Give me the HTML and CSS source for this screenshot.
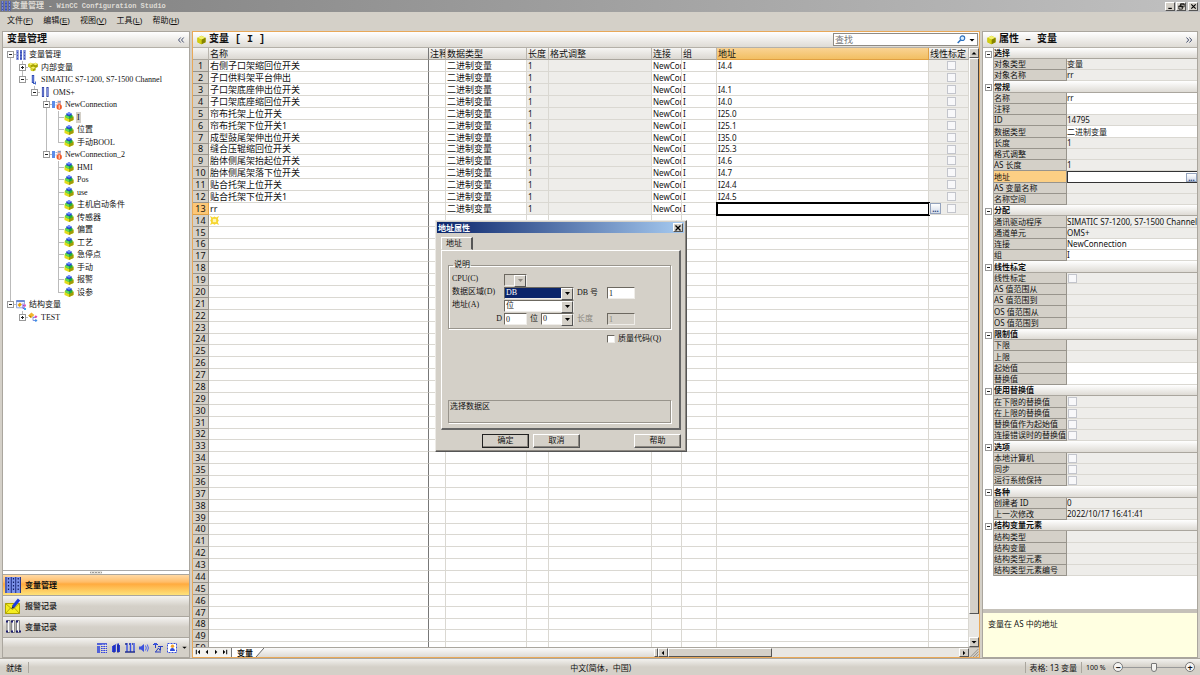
FILE: index.html
```html
<!DOCTYPE html>
<html lang="zh-CN">
<head>
<meta charset="utf-8">
<title>变量管理 - WinCC Configuration Studio</title>
<link rel="stylesheet" href="styles.css">
</head>
<body>
<svg class="defs" aria-hidden="true">
  <symbol id="i-bars" viewBox="0 0 10 10"><path d="M1.5 0v10M5 0v10M8.5 0v10" stroke="#3c50b8" stroke-width="2"/><path d="M1.5 0v10M5 0v10M8.5 0v10" stroke="#93a4ee" stroke-width=".7" stroke-dasharray="2 1"/></symbol>
  <symbol id="i-bars2" viewBox="0 0 10 10"><path d="M3 0v10M7.5 0v10" stroke="#3448a8" stroke-width="2.2"/><path d="M3 1v8M7.5 1v8" stroke="#8fa0ee" stroke-width=".8"/></symbol>
  <symbol id="i-driver" viewBox="0 0 10 10"><path d="M5 0v8" stroke="#2e4ab4" stroke-width="2.4"/><path d="M5 1v6" stroke="#91a4f0" stroke-width=".8"/><path d="M5 8.5h3M7.5 6.5v3" stroke="#4468c8"/></symbol>
  <symbol id="i-cube" viewBox="0 0 10 10"><path d="M.5 2.6 5 .4l4.5 2.2v5L5 9.7.5 7.6z" fill="#b8b400"/><path d="M.5 2.6 5 .4l4.5 2.2L5 4.6z" fill="#f2f06c"/><path d="M5 4.6v5.1l4.5-2.1v-5z" fill="#868400"/><path d="M.5 2.6 5 4.6v5.1L.5 7.6z" fill="#d2ce12"/></symbol>
  <symbol id="i-cubes" viewBox="0 0 11 10"><path d="M.3 1.6 3 .3l2.6 1.2L8.2.4l2.6 1.3v3.2L8.4 6v2.6L5.6 9.8 3 8.500V6L.3 4.8z" fill="#a6a200"/><path d="m.3 1.6 2.700-1.3 2.600 1.300L3 3zM5.600 1.700 8.200.4l2.600 1.300L8.200 3zM3 5.800l2.600-1.300 2.800 1.300-2.800 1.300z" fill="#f7f268"/><path d="M.3 1.600 3 3v2.600L.3 4.600zM3 5.800l2.600 1.300v2.600L3 8.500z" fill="#d7d227"/></symbol>
  <symbol id="i-group" viewBox="0 0 10 10"><path d="M.5 4.500 5 3l4.500 1.500V8L5 10 .5 8z" fill="#e0dc1c"/><path d="M5 6.500V10l4.500-2V4.500z" fill="#a09c08"/><path d="M1.500 3 5 2l3.500 1v2.300L5 6.900 1.500 5.300z" fill="#1fae3c"/><path d="m1.500 3 3.500 1.500v2.400L1.500 5.300z" fill="#63d858"/><path d="M2.300 1.500 5 .2l2.700 1.300v1.600L5 4.300 2.300 3.100z" fill="#2442d0"/><path d="M2.300 1.500 5 .2l2.700 1.300L5 2.700z" fill="#6f94ff"/></symbol>
  <symbol id="i-conn" viewBox="0 0 10 10"><path d="M0 1h3v7H0z" fill="#5b8be8"/><path d="M3.5 2.5h2M3.5 5h2" stroke="#8bb0ec"/><path d="M5.5.7H9v5.5H5.500z" fill="#e8a8a0"/><path d="M6.200 1.800h2.500" stroke="#33a1e8"/><circle cx="7.2" cy="7" r="2.7" fill="#f05a28"/><path d="M7.200 5.200v3.600" stroke="#fff" stroke-width=".9"/></symbol>
  <symbol id="i-struct" viewBox="0 0 10 10"><path d="M.5.5h8v7.300h-8z" fill="#eef2ff" stroke="#6a86cc" stroke-width=".7"/><path d="M.5.5h8v1.300h-8z" fill="#456ccb"/><path d="m1.600 5 2.300-2.500 2 1.900-2.300 2.500z" fill="#e8a000"/><path d="M7 3.500v5M7 5.500h2M7 8.500h2" stroke="#8451d8"/><path d="M8.300 4.500h1.700v2H8.300z" fill="#f05ab8"/><path d="M8 8h2v2H8z" fill="#3ba9f0"/></symbol>
  <symbol id="i-type" viewBox="0 0 10 10"><path d="M.2 3.500 3.400.5l3 2.400-3.300 3.200z" fill="#f3b62d"/><path d="m.2 3.500 2.900.6v2z" fill="#b77c0b"/><path d="M5 4.500v4M5 5.500h3M5 8.500h3" stroke="#6a79d8" stroke-width=".8"/><path d="m7.800 3.300 1.700 1.500-1.700 1.500-1.500-1.500z" fill="#dd45b1"/><path d="m7.800 7 1.700 1.400L7.800 10 6.300 8.400z" fill="#3e8ee6"/></symbol>
  <symbol id="i-navbars" viewBox="0 0 16 16"><path d="M0 0h16v16H0z" fill="#7c92ea"/><path d="M1 0v16M6.3 0v16M10.7 0v16M15.5 0v16" stroke="#27358c" stroke-width="1.1"/><path d="M3.5 1v14M8.5 1v14M13.2 1v14" stroke="#101c60" stroke-width="1.2" stroke-dasharray="1.5 2"/></symbol>
  <symbol id="i-mail" viewBox="0 0 16 16"><path d="M.5 5.5h14v10H.5z" fill="#f5ee20" stroke="#b0a400"/><path d="m.5 5.5 7 6 7-6M.5 15.5l5-5.5M14.5 15.5l-5-5.5" fill="none" stroke="#988e00" stroke-width=".7"/><path d="m8 9 6-7.5" stroke="#1c3ce0" stroke-width="3"/><path d="m6.5 11 .7-2.8 2 1.5z" fill="#141c50"/></symbol>
  <symbol id="i-log" viewBox="0 0 16 16"><path d="M2 1.5h3v12H2zM6.7 1.5h3v12h-3zM11.4 1.5h3v12h-3z" fill="#fafafa" stroke="#777"/><path d="M1 2.5h2M6 2.5h2M11 2.5h2M1 12.5h2M6 12.5h2M11 12.5h2M14 12.5h2" stroke="#1c1c70" stroke-width="2"/></symbol>
  <symbol id="i-t1" viewBox="0 0 10 10"><path d="M0 0h10v2H0zM0 3h3v7H0z" fill="#5262d8"/><path d="M4 3.5h6M4 5.5h6M4 7.5h6M4 9.5h6" stroke="#3544d8"/><path d="M6 1v9M8.5 1v9" stroke="#fff" stroke-width=".5"/></symbol>
  <symbol id="i-t2" viewBox="0 0 10 10"><path d="M1 3h3v6H1zM6 2h3v7H6z" fill="#2a3ed8"/><path d="M1 3.5 5 1v8L1 8zM5 1l3-.7v2z" fill="#3247e4"/><path d="M3 2v8M7 1v9" stroke="#101870" stroke-width=".8"/></symbol>
  <symbol id="i-t3" viewBox="0 0 10 10"><path d="M2 0v9M5.5 0v9M9 0v9" stroke="#3850e4" stroke-width="1.4"/><path d="M0 1h2M4 1h1M7 1h1M0 9h10" stroke="#25318d" stroke-width="1.3"/></symbol>
  <symbol id="i-t4" viewBox="0 0 10 10"><path d="M0 3.5h2L5 1v8L2 6.5H0z" fill="#3c52dc"/><path d="M6.5 2.5q1.6 2.5 0 5M8.3 1.5q2.2 3.5 0 7" fill="none" stroke="#4b62f0"/></symbol>
  <symbol id="i-t5" viewBox="0 0 10 10"><path d="M0 1.5h5M5 3.5h5M2.5 2v3M7.5 4v3M2 9h6M2.5 9l3-4 2 3" fill="none" stroke="#2b3fc0"/><path d="M1 0h3v2H1z" fill="#3a54e0"/></symbol>
  <symbol id="i-t6" viewBox="0 0 10 10"><path d="M.5.5h9v9h-9z" fill="#fff" stroke="#3850dc" stroke-dasharray="2 1"/><path d="M3 8q0-3 2.3-3T8 8z" fill="#2d4adb"/><circle cx="5.5" cy="3.2" r="1.7" fill="#f3a32e"/></symbol>
  <symbol id="i-search" viewBox="0 0 10 10"><circle cx="6" cy="3.6" r="2.6" fill="#d8edff" stroke="#2b71c0" stroke-width="1.2"/><path d="M4 5.6.8 9" stroke="#2b71c0" stroke-width="1.7"/></symbol>
  <symbol id="i-new" viewBox="0 0 8 8"><path d="m0 0 2.5 1.3L4 .4l1.5.9L8 0 6.9 2.5 7.8 4l-.9 1.5L8 8 5.5 6.9 4 7.7 2.5 6.9 0 8l1.1-2.5L.2 4l.9-1.5z" fill="#f6d52c"/><path d="M2.5 2.5h3v3h-3z" fill="#fff6b0"/></symbol>
  <symbol id="i-up" viewBox="0 0 8 8"><path d="M1.5 5.5h5L4 3z"/></symbol>
  <symbol id="i-down" viewBox="0 0 8 8"><path d="M1.5 3h5L4 5.5z"/></symbol>
  <symbol id="i-left" viewBox="0 0 8 8"><path d="M5 1.7v4.6L2.7 4z"/></symbol>
  <symbol id="i-right" viewBox="0 0 8 8"><path d="M3 1.7v4.6L5.3 4z"/></symbol>
  <symbol id="i-first" viewBox="0 0 8 8"><path d="M6 1.7v4.6L3.7 4zM1.8 1.7h1v4.6h-1z"/></symbol>
  <symbol id="i-last" viewBox="0 0 8 8"><path d="M2 1.7v4.6L4.3 4zM5.2 1.7h1v4.6h-1z"/></symbol>
  <symbol id="i-close" viewBox="0 0 8 8"><path d="m1.5 1.5 5 5m0-5-5 5" stroke="#000" stroke-width="1.3"/></symbol>
  <symbol id="i-min" viewBox="0 0 8 8"><path d="M1.5 6.2h4" stroke="#000" stroke-width="1.4"/></symbol>
  <symbol id="i-rest" viewBox="0 0 8 8"><path d="M3 1h4v3.5H3zM1 3.5h4V7H1z" fill="#d4d0c8" stroke="#000" stroke-width=".9"/><path d="M2.5 1.3h5M.5 3.7h5" stroke="#000" stroke-width=".9"/></symbol>
  <symbol id="i-chev-l" viewBox="0 0 8 8"><path d="M3.7 1.5 1.5 4l2.2 2.5M6.7 1.5 4.5 4l2.2 2.5" fill="none" stroke="#444f70"/></symbol>
  <symbol id="i-chev-r" viewBox="0 0 8 8"><path d="M1.5 1.5 3.7 4 1.5 6.5M4.5 1.5 6.7 4 4.5 6.5" fill="none" stroke="#444f70"/></symbol>
</svg>

<header class="titlebar">
  <svg class="ic"><use href="#i-bars"/></svg>
  <h1><span>变量管理</span> - WinCC Configuration Studio</h1>
  <div class="winbtns">
    <button class="bevel" type="button" aria-label="最小化"><svg><use href="#i-min"/></svg></button>
    <button class="bevel" type="button" aria-label="还原"><svg><use href="#i-rest"/></svg></button>
    <button class="bevel last" type="button" aria-label="关闭"><svg><use href="#i-close"/></svg></button>
  </div>
</header>

<nav class="menubar">
  <button type="button">文件(<u>F</u>)</button>
  <button type="button">编辑(<u>E</u>)</button>
  <button type="button">视图(<u>V</u>)</button>
  <button type="button">工具(<u>L</u>)</button>
  <button type="button">帮助(<u>H</u>)</button>
</nav>

<main class="workspace">
  <aside class="panel nav-panel">
    <div class="panel-head"><h2>变量管理</h2><button class="flat" type="button" aria-label="折叠"><svg class="chev"><use href="#i-chev-l"/></svg></button></div>
    <ul class="tree" id="tree"></ul>
    <div class="splitter"></div>
    <button class="nav-item active" type="button"><svg><use href="#i-navbars"/></svg>变量管理</button>
    <button class="nav-item" type="button"><svg><use href="#i-mail"/></svg>报警记录</button>
    <button class="nav-item" type="button"><svg><use href="#i-log"/></svg>变量记录</button>
    <div class="nav-tools">
      <svg><use href="#i-t1"/></svg><svg><use href="#i-t2"/></svg><svg><use href="#i-t3"/></svg><svg><use href="#i-t4"/></svg><svg><use href="#i-t5"/></svg><svg><use href="#i-t6"/></svg><svg class="more"><use href="#i-down"/></svg>
    </div>
  </aside>

  <section class="panel grid-panel">
    <div class="panel-head">
      <svg class="ic"><use href="#i-cube"/></svg><h2>变量 [ I ]</h2>
      <label class="search"><input type="text" placeholder="查找" aria-label="查找"><svg class="mag"><use href="#i-search"/></svg><svg class="drop"><use href="#i-down"/></svg></label>
    </div>
    <div class="grid-body">
      <div class="sheet">
        <table class="vars">
          <colgroup><col class="w-num"><col class="w-name"><col class="w-note"><col class="w-type"><col class="w-len"><col class="w-fmt"><col class="w-conn"><col class="w-group"><col><col class="w-lin"></colgroup>
          <thead><tr><th></th><th class="name">名称</th><th>注释</th><th>数据类型</th><th>长度</th><th>格式调整</th><th>连接</th><th>组</th><th class="hot">地址</th><th>线性标定</th></tr></thead>
          <tbody id="vars"></tbody>
        </table>
      </div>
      <div class="vscroll">
        <button class="bevel" type="button" aria-label="向上"><svg><use href="#i-up"/></svg></button>
        <div class="thumb bevel"></div><div class="space"></div>
        <button class="bevel" type="button" aria-label="向下"><svg><use href="#i-down"/></svg></button>
      </div>
    </div>
    <div class="tabbar">
      <div class="pager">
        <button class="flat" type="button" aria-label="第一个"><svg><use href="#i-first"/></svg></button>
        <button class="flat" type="button" aria-label="上一个"><svg><use href="#i-left"/></svg></button>
        <button class="flat" type="button" aria-label="下一个"><svg><use href="#i-right"/></svg></button>
        <button class="flat" type="button" aria-label="最后一个"><svg><use href="#i-last"/></svg></button>
      </div>
      <button class="sheet-tab" type="button">变量</button>
      <svg class="tab-edge" viewBox="0 0 9 9"><path d="M0 0h9L1 9H0z" fill="#fff"/><path d="M9 0 1 9" stroke="#666"/></svg>
      <div class="tab-space"></div>
      <div class="hscroll">
        <div class="handle bevel"></div>
        <button class="bevel" type="button" aria-label="向左"><svg><use href="#i-left"/></svg></button>
        <div class="thumb bevel"></div><div class="space"></div>
        <button class="bevel" type="button" aria-label="向右"><svg><use href="#i-right"/></svg></button>
      </div>
      <svg class="grip" viewBox="0 0 10 10"><path d="m1 10 9-9M4 10l6-6M7 10l3-3" stroke="#8c8880"/></svg>
    </div>
  </section>

  <aside class="panel prop-panel">
    <div class="panel-head"><svg class="ic"><use href="#i-cube"/></svg><h2>属性 – 变量</h2><button class="flat" type="button" aria-label="展开"><svg class="chev"><use href="#i-chev-r"/></svg></button></div>
    <div class="prop-body">
      <table class="props"><colgroup><col class="w-gut"><col class="w-label"><col></colgroup><tbody id="props"></tbody></table>
    </div>
    <p class="hint">变量在 AS 中的地址</p>
  </aside>

  <form class="dialog" role="dialog" aria-labelledby="dlg-title">
    <div class="dlg-head"><h3 id="dlg-title">地址属性</h3><button class="bevel" type="button" aria-label="关闭"><svg><use href="#i-close"/></svg></button></div>
    <div class="dlg-body">
      <button class="dlg-tab" type="button">地址</button>
      <div class="page">
        <fieldset>
          <legend>说明</legend>
          <div class="fields">
            <label for="cpu">CPU(C)</label>
            <span class="combo small off"><select id="cpu" disabled><option></option></select></span>
            <span></span><span></span>
            <label for="area">数据区域(D)</label>
            <span class="combo picked"><select id="area"><option>DB</option></select></span>
            <label class="mid" for="dbno">DB 号</label>
            <input id="dbno" type="text" value="1">
            <label for="addr">地址(A)</label>
            <span class="combo"><select id="addr"><option>位</option></select></span>
            <span></span><span></span>
            <label class="end" for="dno">D</label>
            <span class="pair"><input id="dno" type="text" value="0"><label for="bit">位</label><span class="combo bit"><select id="bit"><option>0</option></select></span></span>
            <label class="mid dim" for="len">长度</label>
            <input id="len" type="text" value="1" disabled>
          </div>
        </fieldset>
        <div class="quality"><input id="quality" type="checkbox"><label for="quality">质量代码(Q)</label></div>
        <p class="note">选择数据区</p>
      </div>
      <div class="actions">
        <button class="bevel default" type="submit">确定</button>
        <button class="bevel" type="button">取消</button>
        <button class="bevel help" type="button">帮助</button>
      </div>
    </div>
  </form>
</main>

<footer class="status">
  <span class="ready">就绪</span>
  <span class="lang">中文(简体，中国)</span>
  <span class="count">表格: 13 变量</span>
  <span class="zoom">100 %</span>
  <button class="round" type="button" aria-label="缩小">−</button>
  <input class="slider" type="range" min="0" max="100" value="50" aria-label="缩放">
  <button class="round" type="button" aria-label="放大">+</button>
</footer>
<script src="app.js"></script>
</body>
</html>
```

FILE: styles.css
```css
:root {
  --face: #d4d0c8;
  --line: #dad8d2;
  --muted: #eeedea;
  --cjk: "Noto Sans CJK SC", sans-serif;
  --ui: "Noto Sans", var(--cjk);
  --mono: "Liberation Mono", var(--cjk);
  --serif: "Liberation Serif", var(--cjk);
}

* { box-sizing: border-box; }

body {
  margin: 0;
  height: 100vh;
  display: flex;
  flex-direction: column;
  overflow: hidden;
  background: var(--face);
  color: #111;
  font: 8px/11px var(--ui);
}

h1, h2, h3, p, ul, fieldset { margin: 0; padding: 0; }
button, input, select { font: inherit; color: inherit; margin: 0; padding: 0; border-radius: 0; }
svg { display: block; flex: none; }
.defs { position: absolute; width: 0; height: 0; }

.bevel {
  background: var(--face);
  border: 1px solid;
  border-color: #fff #555 #555 #fff;
  display: flex;
  align-items: center;
  justify-content: center;
}
.bevel svg, .flat svg { width: 8px; height: 8px; }
.flat { background: none; border: 0; }

/* title and menu */
.titlebar {
  display: flex;
  align-items: center;
  height: 12px;
  flex: none;
  padding: 0 2px 0 1px;
  gap: 1px;
  background: linear-gradient(90deg, #808080, #c0c0c0);
}
.titlebar .ic { width: 10px; height: 10px; }
.titlebar h1 { font: bold 7px/11px var(--mono); color: #dedbd5; flex: 1; }
.titlebar h1 span { font-size: 8px; }
.winbtns { display: flex; gap: 1px; }
.winbtns .bevel { width: 10px; height: 9px; }
.winbtns .bevel svg { width: 7px; height: 7px; }
.winbtns .last { margin-left: 1px; }

.menubar { display: flex; gap: 10px; height: 18px; flex: none; padding: 0 7px; align-items: center; }
.menubar button { border: 0; background: none; font: 8px/12px "Liberation Sans", var(--cjk); }

/* panels */
.workspace { position: relative; flex: 1; min-height: 0; display: flex; gap: 2px; padding: 1px 2px 0; }
.panel { display: flex; flex-direction: column; min-height: 0; border: 1px solid #aaa69e; background: #fff; }
.nav-panel { width: 188px; flex: none; }
.grid-panel { flex: 1; min-width: 0; border-color: #e8a858; }
.prop-panel { width: 216px; flex: none; }
.panel-head {
  display: flex;
  align-items: center;
  gap: 3px;
  height: 16px;
  flex: none;
  padding: 0 4px;
  background: linear-gradient(#fff, #dedbd5);
  border-bottom: 1px solid #b4b0a8;
}
.panel-head h2 { font: bold 10px/14px var(--mono); flex: 1; }
.panel-head .ic { width: 9px; height: 10px; }

/* tree */
.tree { list-style: none; flex: 1; min-height: 0; overflow: hidden; padding-left: 1px; }
.tree li { display: flex; align-items: center; height: 13px; font: 8px/11px var(--serif); }
.tree li:nth-child(2n) { height: 12px; }
.tree svg { width: 10px; height: 10px; margin-right: 2px; }
.tree span { padding: 0 1px; }
.tree .selected { background: var(--face); }
.g { width: 12px; align-self: stretch; display: flex; align-items: center; justify-content: center; background-repeat: no-repeat; }
.g-v { background-image: linear-gradient(#bbb, #bbb); background-size: 1px 100%; background-position: 6px 0; }
.g-t { background-image: linear-gradient(#bbb, #bbb), linear-gradient(#bbb, #bbb); background-size: 1px 100%, 6px 1px; background-position: 6px 0, 6px 6px; }
.g-l { background-image: linear-gradient(#bbb, #bbb), linear-gradient(#bbb, #bbb); background-size: 1px 6px, 6px 1px; background-position: 6px 0, 6px 6px; }
.g-f { background-image: linear-gradient(#bbb, #bbb), linear-gradient(#bbb, #bbb); background-size: 1px 6px, 6px 1px; background-position: 6px 7px, 6px 6px; }
.box { position: relative; width: 7px; height: 7px; flex: none; border: 1px solid #999; background: #fff; }
.box::before, .box.plus::after { content: ""; position: absolute; left: 1px; right: 1px; top: 2px; height: 1px; background: #222; }
.box.plus::after { left: 2px; right: auto; width: 1px; top: 1px; height: 3px; }

.splitter {
  height: 4px;
  flex: none;
  background: radial-gradient(circle, #555 1px, transparent 1px) center / 3px 3px repeat-x content-box #e4e2dc;
  border-top: 1px solid #aaa;
  padding: 0 87px;
}
.nav-item {
  display: flex;
  align-items: center;
  gap: 4px;
  height: 21px;
  flex: none;
  padding: 0 2px;
  border: 0;
  border-top: 1px solid #aaa69e;
  background: linear-gradient(#f4f3f1, #d4d0c8 50%, #d0ccc4);
  font: bold 8px/12px var(--cjk);
  color: #333;
  text-align: left;
}
.nav-item svg { width: 16px; height: 16px; }
.nav-item.active { color: #111; background: linear-gradient(#ffd9a4, #ffbd69 35%, #ffab3f 45%, #fee27a); }
.nav-tools {
  display: flex;
  align-items: center;
  justify-content: flex-end;
  gap: 4px;
  height: 20px;
  flex: none;
  padding-right: 1px;
  border-top: 1px solid #aaa69e;
  background: linear-gradient(#f4f3f1, #d4d0c8 50%);
}
.nav-tools svg { width: 10px; height: 10px; }
.nav-tools .more { width: 7px; height: 7px; }

/* variable sheet */
.search { display: flex; align-items: center; width: 145px; height: 13px; border: 1px solid #8f8b84; background: #fff; margin-right: -3px; padding-right: 1px; }
.search input { flex: 1; min-width: 0; border: 0; outline: 0; background: none; padding-left: 1px; font: 9px/11px var(--ui); }
.search input::placeholder { color: #777; }
.mag { width: 9px; height: 9px; }
.drop { width: 8px; height: 8px; margin-left: 2px; }

.grid-body { flex: 1; min-height: 0; display: flex; }
.sheet { flex: 1; min-width: 0; overflow: hidden; }
table { width: 100%; table-layout: fixed; border-collapse: separate; border-spacing: 0; }
th, td { padding: 0; overflow: hidden; white-space: nowrap; text-align: left; font-weight: normal; }
.w-num { width: 16px; }
.w-name { width: 220px; }
.w-note { width: 17px; }
.w-type { width: 81px; }
.w-len { width: 22px; }
.w-fmt { width: 103px; }
.w-conn { width: 30px; }
.w-group { width: 35px; }
.w-lin { width: 40px; }

.vars thead th {
  height: 12px;
  padding-left: 1px;
  font: 9px/11px var(--ui);
  background: linear-gradient(#f6f5f3, #dbd8d2);
  border-right: 1px solid #b9b5ad;
  border-bottom: 1px solid #aaa69e;
}
.vars thead .hot { background: linear-gradient(#f9d394, #f2bf62); border-color: #e0a042; }
.vars tbody > tr > * { height: 12px; line-height: 10px; border-bottom: 1px solid var(--line); border-right: 1px solid var(--line); }
.vars tbody > tr:nth-child(8n) > * { height: 11px; }
.vars tbody th { background: var(--face); text-align: center; font-size: 9px; border-color: #97938b; }
.vars td { padding-left: 1px; }
.vars .name { border-right-color: #777; }
.vars td.name, .vars td.type { font-size: 9px; }
.vars td.muted { background: var(--muted); }
.vars th.current { background: #fcc777; border-color: #e0a042; }
.vars td.chosen { outline: 2px solid #000; outline-offset: -1px; position: relative; }
.vars td.lin { padding: 0; position: relative; overflow: visible; }
.vars td svg { width: 9px; height: 9px; }
input[type="checkbox"] { appearance: none; display: block; width: 9px; height: 9px; background: #f8f8fa; border: 1px solid #c3c5cc; }
.vars input[type="checkbox"] { margin: 0 auto; position: relative; left: 3px; }
.more-btn { border: 1px solid #94a3bd; background: linear-gradient(#fff, #d3dbe9); width: 11px; height: 11px; font: bold 8px/5px var(--ui); color: #27427c; padding: 0; text-align: center; }
.vars .more-btn { position: absolute; left: 1px; top: 0; }

.vscroll { width: 10px; flex: none; display: flex; flex-direction: column; background: #e9e7e3; }
.vscroll button { height: 10px; flex: none; }
.vscroll .thumb { flex: 1; border-right-color: #444; }
.vscroll .space { height: 23px; }

.tabbar { display: flex; height: 10px; flex: none; background: linear-gradient(#fafafa, #dddad4); border-top: 1px solid #aaa69e; }
.pager { display: flex; background: #f4f3f0; border-right: 1px solid #777; padding: 0 1px; }
.pager button { width: 9px; height: 9px; display: flex; }
.sheet-tab { border: 0; background: #fff; font: bold 8px/9px var(--cjk); padding: 0 2px 0 5px; }
.tab-edge { width: 9px; height: 9px; }
.tab-space { flex: 1; }
.hscroll { width: 315px; flex: none; display: flex; background: #e9e7e3; }
.hscroll button { width: 10px; }
.hscroll .handle { width: 4px; }
.hscroll .thumb { width: 104px; }
.hscroll .space { flex: 1; }
.grip { width: 10px; height: 9px; background: var(--face); }

/* properties */
.prop-body { flex: 1; min-height: 0; overflow: hidden; border-bottom: 4px solid #c5c1b9; }
.w-gut { width: 11px; }
.w-label { width: 73px; }
.props tr > * { height: 11px; line-height: 10px; }
.props tr:nth-child(4n) > * { height: 12px; }
.props .gut { padding-left: 2px; border-right: 1px solid #aaa69e; }
.props .cat { font-weight: bold; border-bottom: 1px solid #aaa69e; background: linear-gradient(#fff, #dedbd5); }
.props .label { background: var(--face); border-bottom: 1px solid #98948c; border-right: 1px solid #98948c; }
.props .val { background: var(--muted); border-bottom: 1px solid var(--line); }
.props .edit { background: #fff; }
.props .hot .label { background: #fccf84; }
.props .hot .val { border: 1px solid #333; border-right: 0; padding: 0; }
.props .hot .more-btn { display: block; margin-left: auto; height: 9px; }
.props input { margin-left: 1px; }
.hint { height: 44px; flex: none; background: #ffffe1; padding: 5px; }

/* address dialog */
.dialog {
  position: absolute;
  left: 435px;
  top: 190px;
  width: 252px;
  background: var(--face);
  border: 1px solid;
  border-color: #eceae6 #555 #555 #eceae6;
  box-shadow: inset -1px -1px #8b8780;
  padding: 1px 2px 3px 1px;
  font: 8px/10px var(--serif);
}
.dlg-head { display: flex; align-items: center; height: 11px; padding: 0 1px; background: linear-gradient(90deg, #0a246a, #a6caf0); }
.dlg-head h3 { flex: 1; color: #fff; font: bold 8px/11px var(--cjk); }
.dlg-head button { width: 10px; height: 9px; }
.dlg-body { padding: 4px 3px 0 4px; }
.dlg-tab { display: block; width: 32px; height: 13px; border: 1px solid; border-color: #fff #555 transparent #fff; border-right-width: 2px; background: none; text-align: left; padding-left: 4px; }
.page { height: 180px; display: flex; flex-direction: column; border: 1px solid #fff; border-right: 2px solid #666; border-bottom: 2px solid #666; padding: 9px 8px 5px 6px; }
.dialog fieldset { border: 1px solid #98948c; box-shadow: 1px 1px #fff, inset 1px 1px #fff; padding: 4px 3px 3px; min-width: 0; }
.dialog legend { margin-left: 1px; padding: 0 1px; line-height: 10px; }
.fields { display: grid; grid-template-columns: 52px 70px 33px 28px; grid-auto-rows: 12px; row-gap: 1px; }
.fields .mid { padding-left: 3px; align-self: center; }
.fields .end { text-align: right; padding-right: 2px; align-self: center; }
.dim { color: #8b8780; }
.dialog input[type="text"], .combo select {
  appearance: none;
  display: block;
  width: 100%;
  height: 12px;
  min-width: 0;
  border: 1px solid;
  border-color: #6c6860 #efede9 #efede9 #6c6860;
  background: #fff;
  outline: 0;
  padding: 0 1px;
  line-height: 10px;
  opacity: 1;
}
.dialog input:disabled, .combo.off select { background: var(--face); color: #8b8780; }
.combo { position: relative; display: block; }
.combo::before { content: ""; position: absolute; right: 1px; top: 1px; width: 10px; height: 10px; background: var(--face); border: 1px solid; border-color: #fff #555 #555 #fff; pointer-events: none; }
.combo::after { content: ""; position: absolute; right: 4px; top: 5px; width: 5px; height: 3px; background: #000; clip-path: polygon(0 0, 100% 0, 50% 100%); pointer-events: none; }
.combo.off::after { background: #8b8780; }
.combo.small { width: 23px; }
.combo.picked select { background: #0a246a; color: #fff; }
.combo.bit { width: 33px; }
.pair { display: flex; align-items: center; justify-content: space-between; }
.dialog .pair input { width: 23px; }
.quality { display: flex; align-items: center; margin: 5px 0 0 159px; gap: 3px; }
.quality input { width: 8px; height: 8px; border-color: #6c6860 #efede9 #efede9 #6c6860; background: #fff; flex: none; }
.note { margin-top: auto; height: 23px; border: 1px solid #98948c; box-shadow: 1px 1px #fff; padding: 1px; }
.actions { display: flex; gap: 4px; padding: 4px 0 0 41px; }
.actions button { width: 47px; height: 14px; box-shadow: inset -1px -1px #8b8780; }
.actions .default { border-color: #222; }
.actions .help { margin-left: auto; }

/* status bar */
.status { display: flex; align-items: center; height: 17px; flex: none; padding: 0 5px; background: linear-gradient(#f2f1ee, #d4d0c8 50%); border-top: 1px solid #aaa69e; }
.ready { padding: 0 6px 0 1px; border-right: 1px solid #aaa69e; }
.lang { flex: 1; text-align: center; padding-left: 148px; }
.count { padding: 0 4px; border-left: 1px solid #aaa69e; }
.zoom { padding: 0 4px; border-left: 1px solid #aaa69e; width: 32px; font-size: 7px; white-space: nowrap; }
.round { width: 10px; height: 10px; border: 1px solid #777; border-radius: 50%; background: #f6f5f3; font: bold 9px/7px var(--ui); text-align: center; }
.slider { appearance: none; flex: none; width: 62px; height: 10px; background: linear-gradient(#999, #999) center / 100% 1px no-repeat; }
.slider::-webkit-slider-thumb { appearance: none; width: 6px; height: 9px; border: 1px solid #777; border-radius: 1px 1px 3px 3px; background: #f4f3f0; }
```

FILE: app.js
```js
const icon = id => `<svg><use href="#i-${id}"/></svg>`;

/* Tree: guide columns, expander, icon, label */
const tree = [
  ["F", "-", "bars", "变量管理"],
  ["|T", "+", "cubes", "内部变量"],
  ["|L", "-", "driver", "SIMATIC S7-1200, S7-1500 Channel"],
  ["| L", "-", "bars2", "OMS+"],
  ["|  T", "-", "conn", "NewConnection"],
  ["|  |T", "", "group", "I"],
  ["|  |T", "", "group", "位置"],
  ["|  |L", "", "group", "手动BOOL"],
  ["|  L", "-", "conn", "NewConnection_2"],
  ...["HMI", "Pos", "use", "主机启动条件", "传感器", "偏置", "工艺", "急停点", "手动", "报警"]
    .map(t => ["|   T", "", "group", t]),
  ["|   L", "", "group", "设参"],
  ["L", "-", "struct", "结构变量"],
  [" L", "+", "type", "TEST"]
];
const guide = { "|": "g-v", T: "g-t", L: "g-l", F: "g-f", " ": "" };
document.getElementById("tree").innerHTML = tree.map(([cols, box, ic, text]) => {
  const last = cols.length - 1;
  const guides = [...cols].map((c, i) => {
    const btn = i === last && box
      ? `<button type="button" class="box${box === "+" ? " plus" : ""}" aria-label="${text}"></button>` : "";
    return `<div class="g ${guide[c]}">${btn}</div>`;
  }).join("");
  return `<li>${guides}${icon(ic)}<span${text === "I" ? ' class="selected"' : ""}>${text}</span></li>`;
}).join("");

/* Variable sheet */
const vars = [
  ["右侧子口架缩回位开关", "I4.4"], ["子口供料架平台伸出", ""],
  ["子口架底座伸出位开关", "I4.1"], ["子口架底座缩回位开关", "I4.0"],
  ["帘布托架上位开关", "I25.0"], ["帘布托架下位开关1", "I25.1"],
  ["成型鼓尾架伸出位开关", "I35.0"], ["缝合压辊缩回位开关", "I25.3"],
  ["胎体侧尾架抬起位开关", "I4.6"], ["胎体侧尾架落下位开关", "I4.7"],
  ["贴合托架上位开关", "I24.4"], ["贴合托架下位开关1", "I24.5"], ["rr", ""]
];
const more = '<button class="more-btn" type="button" aria-label="浏览地址">...</button>';
let rows = "";
for (let n = 1; n <= 50; n++) {
  const v = vars[n - 1];
  const cur = n === 13;
  rows += `<tr><th${cur ? ' class="current"' : ""}>${n}</th>`;
  rows += v
    ? `<td class="name">${v[0]}</td><td></td><td class="type">二进制变量</td><td class="muted">1</td><td class="muted"></td><td>NewCor</td><td>I</td><td${cur ? ' class="chosen"' : ""}>${v[1]}</td><td class="lin muted">${cur ? more : ""}<input type="checkbox" aria-label="线性标定 ${n}"></td>`
    : `<td class="name">${n === 14 ? icon("new") : ""}</td>` + "<td></td>".repeat(8);
  rows += "</tr>";
}
document.getElementById("vars").innerHTML = rows;

/* Properties: [label, value, kind]; e = editable, c = checkbox, h = current */
const props = {
  "选择": [["对象类型", "变量"], ["对象名称", "rr"]],
  "常规": [["名称", "rr", "e"], ["注释", "", "e"], ["ID", "14795"], ["数据类型", "二进制变量", "e"], ["长度", "1"], ["格式调整", ""], ["AS 长度", "1"], ["地址", "", "h"], ["AS 变量名称", ""], ["名称空间", ""]],
  "分配": [["通讯驱动程序", "SIMATIC S7-1200, S7-1500 Channel"], ["通道单元", "OMS+"], ["连接", "NewConnection", "e"], ["组", "I", "e"]],
  "线性标定": [["线性标定", "", "c"], ["AS 值范围从", ""], ["AS 值范围到", ""], ["OS 值范围从", ""], ["OS 值范围到", ""]],
  "限制值": [["下限", ""], ["上限", ""], ["起始值", "", "e"], ["替换值", "", "e"]],
  "使用替换值": [["在下限的替换值", "", "c"], ["在上限的替换值", "", "c"], ["替换值作为起始值", "", "c"], ["连接错误时的替换值", "", "c"]],
  "选项": [["本地计算机", "", "c"], ["同步", "", "c"], ["运行系统保持", "", "c"]],
  "各种": [["创建者 ID", "0"], ["上一次修改", "2022/10/17 16:41:41"]],
  "结构变量元素": [["结构类型", ""], ["结构变量", ""], ["结构类型元素", ""], ["结构类型元素编号", ""]]
};
document.getElementById("props").innerHTML = Object.entries(props).map(([cat, items]) =>
  `<tr><td class="gut"><button type="button" class="box" aria-label="${cat}"></button></td><th class="cat" colspan="2">${cat}</th></tr>` +
  items.map(([label, value, kind]) => {
    const body = kind === "c" ? `<input type="checkbox" aria-label="${label}">` : kind === "h" ? more : value;
    const edit = kind === "e" || kind === "h" ? " edit" : "";
    return `<tr${kind === "h" ? ' class="hot"' : ""}><td class="gut"></td><th class="label">${label}</th><td class="val${edit}">${body}</td></tr>`;
  }).join("")
).join("");
```
